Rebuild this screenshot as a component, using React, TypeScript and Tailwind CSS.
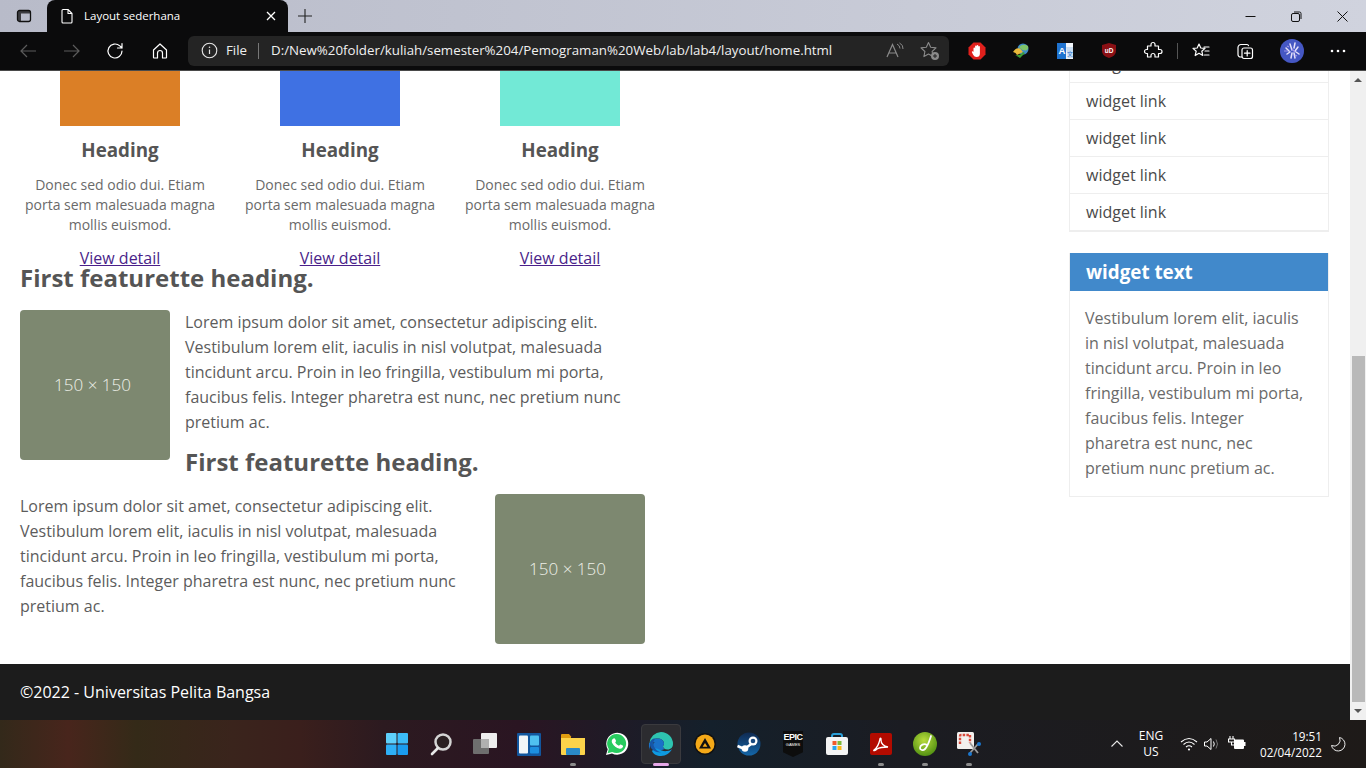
import React from "react";

const S = ({ w = 20, h = 20, vb = "0 0 20 20", children, className = "" }: any) => (
  <svg width={w} height={h} viewBox={vb} fill="none" className={className}>{children}</svg>
);
const st = { stroke: "currentColor", strokeWidth: 1.2, strokeLinecap: "round", strokeLinejoin: "round" } as const;

function TabBar() {
  return (
    <div className="flex h-[32px] bg-gradient-to-r from-[#b8bbc9] to-[#d0d3de] text-[#111]">
      <div className="w-[47px] flex items-center justify-center">
        <S w={16} h={16} vb="0 0 16 16"><rect x="1.500" y="2.500" width="13" height="11" rx="2" stroke="#111" strokeWidth="1.300" /><path d="M2 3h12v2.500H5V13H2z" fill="#111" opacity=".75" /></S>
      </div>
      <div className="w-[241px] h-[32px] bg-[#0b0b0c] rounded-t-lg flex items-center pl-[13px] pr-[12px] text-white">
        <S w={14} h={16} vb="0 0 14 16"><path d="M2 2.500a1 1 0 0 1 1-1h5l4 4v8.500a1 1 0 0 1-1 1H3a1 1 0 0 1-1-1zM8 1.500v4h4" stroke="#fff" strokeWidth="1.100" strokeLinejoin="round" /></S>
        <span className="ml-[10px] text-[11.500px] flex-1">Layout sederhana</span>
        <S w={10} h={10} vb="0 0 10 10"><path d="M1 1l8 8M9 1L1 9" stroke="#fff" strokeWidth="1.300" /></S>
      </div>
      <div className="w-[34px] flex items-center justify-center">
        <S w={16} h={16} vb="0 0 16 16"><path d="M8 1v14M1 8h14" stroke="#222" strokeWidth="1.100" /></S>
      </div>
      <div className="flex-1" />
      <div className="flex items-center pr-[18px] gap-[35px]">
        <S w={11} h={11} vb="0 0 11 11"><path d="M0.500 5.500h10" stroke="#111" /></S>
        <S w={11} h={11} vb="0 0 11 11"><rect x="0.500" y="2.500" width="8" height="8" rx="1.500" stroke="#111" /><path d="M3 1h5.500A1.500 1.500 0 0 1 10 2.500V8" stroke="#111" /></S>
        <S w={11} h={11} vb="0 0 11 11"><path d="M.5.500l10 10M10.500.500l-10 10" stroke="#111" /></S>
      </div>
    </div>
  );
}

function ToolBtn({ w, children, className = "" }: any) {
  return <div className={`flex items-center justify-center shrink-0 ${className}`} style={{ width: w }}>{children}</div>;
}

function ToolBar() {
  return (
    <div className="flex h-[39px] bg-[#0b0b0c] border-b border-[#4a4a4a] items-center text-white pb-[1px]">
      <div className="w-[6px]" />
      <ToolBtn w={44}><S><path d="M18 10H3M9 4l-6 6 6 6" stroke="#5c5c5c" strokeWidth="1.200" /></S></ToolBtn>
      <ToolBtn w={44}><S><path d="M2 10h15M11 4l6 6-6 6" stroke="#5c5c5c" strokeWidth="1.200" /></S></ToolBtn>
      <ToolBtn w={44}><S><path d="M16 10a7 7 0 1 1-2.200-5.100L16 7M16 2.500V7h-4.500" {...st} stroke="#fff" /></S></ToolBtn>
      <ToolBtn w={44}><S><path d="M3.500 9L10 3l6.500 6v7.500a.5.5 0 0 1-.5.500h-3.500v-5a2.500 2.500 0 0 0-5 0v5H4a.5.5 0 0 1-.5-.5z" {...st} stroke="#fff" /></S></ToolBtn>
      <div className="w-[761px] h-[30px] ml-[6px] rounded-md bg-[#242424] flex items-center shrink-0">
        <div className="w-[13px]" />
        <S w={17} h={17} vb="0 0 17 17"><circle cx="8.500" cy="8.500" r="7.300" stroke="#e6e6e6" strokeWidth="1.100" /><path d="M8.500 7.500v4.500" stroke="#e6e6e6" strokeWidth="1.200" /><circle cx="8.500" cy="5.200" r=".8" fill="#e6e6e6" /></S>
        <span className="ml-[8px] text-[13.300px] text-[#eee]">File</span>
        <div className="w-px h-[16px] bg-[#777] ml-[11px] mr-[12px]" />
        <span className="text-[13.300px] text-[#f0f0f0] flex-1 whitespace-nowrap">D:/New%20folder/kuliah/semester%204/Pemograman%20Web/lab/lab4/layout/home.html</span>
        <S w={20} h={20} className="mr-[14px]"><path d="M2 16L7.500 3.500 13 16M4 12h7" stroke="#8a8a8a" strokeWidth="1.200" /><path d="M12 3q3 1.500 3 4.500M14.500 2q4 2 3.500 6" stroke="#8a8a8a" strokeWidth="1" /></S>
        <S w={22} h={22} vb="0 0 22 22" className="mr-[8px]"><path d="M9.500 2.500l2.200 4.800 5.300.6-3.900 3.600 1 5.100-4.600-2.600-4.600 2.600 1-5.100L2 7.900l5.300-.6z" stroke="#8a8a8a" strokeWidth="1.100" strokeLinejoin="round" /><circle cx="16" cy="16" r="4" fill="#8a8a8a" /><path d="M14 16h4M16 14v4" stroke="#222" strokeWidth="1" /></S>
      </div>
      <div className="w-[6px]" />
      <ToolBtn w={44}><S w={18} h={18} vb="0 0 18 18"><path d="M5.500 .5h7L17.500 5.500v7L12.500 17.500h-7L.5 12.500v-7z" fill="#e0201c" /><path d="M5.500 10V6.500q0-.9.8-.9t.8.9V9 4.500q0-.9.8-.9t.8.9V8.500 3.800q0-.9.800-.9t.8.9V8.500 5q0-.9.800-.9t.8.900v6.500q0 3.500-3.400 3.500-2.200 0-3.200-2L4 10.500q-.5-.9.3-1.300.6-.2 1.200.8z" fill="#fff" /></S></ToolBtn>
      <ToolBtn w={44}><S w={18} h={16} vb="0 0 18 16"><circle cx="11" cy="6" r="5.500" fill="#3f8ac8" /><path d="M7 4q4-4 9-1 1 3-2 4.500-4 .5-7-3.500z" fill="#7fc46a" /><path d="M1 9q3-5 7-3.500l3 3.500-6 3q-1-2.500-4-3z" fill="#e9b93a" /><path d="M3 12q5 1 8-3l2 1-5 5z" fill="#3d9e35" /></S></ToolBtn>
      <ToolBtn w={44}><S w={16} h={16} vb="0 0 16 16"><rect width="16" height="16" fill="#f2f6fb" /><path d="M0 0h9v16H0z" fill="#1f73d0" /><path d="M9 4h7v11H11z" fill="#c8dcf0" /><text x="1.500" y="10.500" fontSize="9.500" fontWeight="700" fill="#fff" fontFamily="Liberation Sans">A</text><text x="10" y="13" fontSize="6" fill="#1f73d0" fontFamily="Noto Sans CJK SC">文</text></S></ToolBtn>
      <ToolBtn w={44}><S w={16} h={17} vb="0 0 16 17"><path d="M8 1l7 2v6q0 5-7 7-7-2-7-7V3z" fill="#8a1015" /><text x="8" y="10.500" textAnchor="middle" fontSize="6.500" fontWeight="700" fill="#fff" fontFamily="Liberation Sans">uD</text></S></ToolBtn>
      <ToolBtn w={44}><S><path d="M8 3.500a2 2 0 0 1 4 0V5h3.500v3.500H17a2 2 0 0 1 0 4h-1.500V16H12v-1.500a2 2 0 0 0-4 0V16H4.500v-3.500H3.500a2 2 0 0 1 0-4H4.500V5H8z" {...st} stroke="#fff" /></S></ToolBtn>
      <div className="w-px h-[16px] bg-[#555] ml-[2px]" />
      <ToolBtn w={44} className="ml-[1px]"><S><path d="M8 3l1.800 4 4.200.4-3.200 2.800 1 4.300L8 12.300l-3.800 2.200 1-4.300L2 7.400 6.200 7zM13 6h5M14 10h4M13.500 14H18" {...st} stroke="#fff" /></S></ToolBtn>
      <ToolBtn w={44}><S><path d="M7 16H5.500A2.500 2.500 0 0 1 3 13.500V6.500a3 3 0 0 1 3-3h6a1.500 1.500 0 0 1 1.500 1.200" {...st} stroke="#fff" /><rect x="7" y="7" width="10.500" height="10.500" rx="2" {...st} stroke="#fff" /><path d="M12.200 9.500v5.500M9.500 12.200H15" {...st} stroke="#fff" /></S></ToolBtn>
      <ToolBtn w={44} className="ml-[3px]"><S w={24} h={24} vb="0 0 24 24"><circle cx="12" cy="12" r="12" fill="#3b46b8" /><circle cx="12" cy="12" r="12" fill="#5a78d8" opacity=".35" /><path d="M6 9l3 3M10 5l2 6M15 4l-1 5M18 8l-3 4M7 15l3-2M11 19l1-5M15 19l-1-5M19 15l-3-2" stroke="#e4e0fa" strokeWidth="1.500" strokeLinecap="round" /><path d="M4 12h4M12 10l3 3M9 8l-2-1M17 17l-2-1" stroke="#9d93ea" strokeWidth="1.200" /></S></ToolBtn>
      <ToolBtn w={48}><S w={16} h={4} vb="0 0 16 4"><circle cx="2" cy="2" r="1.300" fill="#fff" /><circle cx="8" cy="2" r="1.300" fill="#fff" /><circle cx="14" cy="2" r="1.300" fill="#fff" /></S></ToolBtn>
    </div>
  );
}

function Card({ color }: { color: string }) {
  return (
    <div className="w-[220px] px-[10px] text-center">
      <div className="w-[120px] h-[55px] mx-auto" style={{ background: color }} />
      <h3 className="text-[18.800px] leading-[24px] font-bold mt-[12px] text-[#555]">Heading</h3>
      <p className="text-[14px] leading-[20px] mt-[13px] text-[#6a6a6a]">Donec sed odio dui. Etiam porta sem malesuada magna mollis euismod.</p>
      <a className="block text-[16px] leading-[22px] mt-[12px] underline text-[#4a1f8a]">View detail</a>
    </div>
  );
}

const Ph = () => (
  <div className="w-[150px] h-[150px] shrink-0 rounded-[4px] bg-[#7d8870] flex items-center justify-center text-[#eef0e8] text-[17px] font-light pr-[5px]">150 × 150</div>
);

const LOREM = "Lorem ipsum dolor sit amet, consectetur adipiscing elit. Vestibulum lorem elit, iaculis in nisl volutpat, malesuada tincidunt arcu. Proin in leo fringilla, vestibulum mi porta, faucibus felis. Integer pharetra est nunc, nec pretium nunc pretium ac.";

function Left() {
  return (
    <div className="w-[670px] shrink-0">
      <div className="flex pl-[10px]">
        <Card color="#db7f26" />
        <Card color="#3f71e3" />
        <Card color="#72e9d6" />
      </div>
      <h2 className="pl-[20px] text-[24px] leading-[30px] font-bold text-[#555] mt-[-6px] relative">First featurette heading.</h2>
      <div className="flex pl-[20px] mt-[17px]">
        <Ph />
        <div className="ml-[15px] w-[440px]">
          <p className="text-[16px] leading-[25px] text-[#5c5c5c]">{LOREM}</p>
          <h2 className="text-[24px] leading-[30px] font-bold text-[#555] mt-[12px]">First featurette heading.</h2>
        </div>
      </div>
      <div className="flex pl-[20px] pr-[25px] mt-[17px] items-start justify-between">
        <p className="text-[16px] leading-[25px] text-[#5c5c5c] w-[440px]">{LOREM}</p>
        <Ph />
      </div>
    </div>
  );
}

function Side() {
  return (
    <div className="w-[260px] ml-[399px] shrink-0">
      <div className="border-x border-b-2 border-[#eee] h-[161px] overflow-hidden">
        <div className="mt-[-25px]">
          {[0, 1, 2, 3, 4].map((i) => (
            <div key={i} className="h-[37px] last:h-[36px] px-[16px] flex items-center text-[16px] text-[#4a4a4a] border-b border-[#eee] last:border-b-0">widget link</div>
          ))}
        </div>
      </div>
      <div className="mt-[21px] border-x border-b border-[#eee]">
        <div className="h-[38px] bg-[#4189cb] px-[16px] flex items-center text-white text-[18.800px] font-bold">widget text</div>
        <p className="px-[15px] pt-[15px] pb-[15px] text-[16px] leading-[25px] text-[#6a6a6a]">{LOREM.slice(57)}</p>
      </div>
    </div>
  );
}

function Scroll() {
  return (
    <div className="w-[16px] shrink-0 bg-[#f0f0f0] flex flex-col items-center">
      <div className="h-[18px] flex items-center justify-center"><div className="w-0 h-0 border-x-[4px] border-x-transparent border-b-[4px] border-b-[#555]" /></div>
      <div className="w-[13px] h-[346px] mt-[267px] bg-[#b9b9b9]" />
      <div className="flex-1" />
      <div className="h-[18px] flex items-center justify-center"><div className="w-0 h-0 border-x-[4px] border-x-transparent border-t-[4px] border-t-[#555]" /></div>
    </div>
  );
}

function Dot({ show, color = "#8c8c8c", w = 6 }: any) {
  return show ? <div className="absolute bottom-[2px] left-1/2 -translate-x-1/2 h-[3px] rounded-full" style={{ width: w, background: color }} /> : null;
}

function TaskIcon({ children, dot, active }: any) {
  return (
    <div className="relative w-[44px] h-[48px] flex items-center justify-center">
      {active && <div className="absolute left-[2px] right-[2px] top-[4px] bottom-[4px] rounded-[4px] bg-[#2c2c30] border border-[#3a3a3e]" />}
      <div className="relative">{children}</div>
      <Dot show={dot || active} color={active ? "#e6a8e8" : "#8c8c8c"} w={active ? 16 : 6} />
    </div>
  );
}

function TaskBar() {
  return (
    <div className="h-[48px] flex items-center bg-[linear-gradient(90deg,#33291a_0%,#48251c_5%,#342a18_10%,#3a241c_17%,#3a1f1c_22%,#2c1a20_28%,#2a1522_38%,#14202b_52%,#1b1c22_66%,#1e1a18_100%)] text-white">
      <div className="w-[375px] shrink-0" />
      <div className="flex w-[616px] shrink-0">
        <TaskIcon><S w={24} h={24} vb="0 0 24 24"><rect x="1" y="1" width="10.500" height="10.500" rx="1" fill="#5ed0fb" /><rect x="12.500" y="1" width="10.500" height="10.500" rx="1" fill="#3cbcf8" /><rect x="1" y="12.500" width="10.500" height="10.500" rx="1" fill="#2eb0f7" /><rect x="12.500" y="12.500" width="10.500" height="10.500" rx="1" fill="#1a9cf0" /></S></TaskIcon>
        <TaskIcon><S w={24} h={24} vb="0 0 24 24"><circle cx="14" cy="10" r="7.500" stroke="#d4d4d4" strokeWidth="2.500" fill="#2a2022" /><path d="M9 16l-6 6" stroke="#e8e8e8" strokeWidth="2.600" strokeLinecap="round" /></S></TaskIcon>
        <TaskIcon><S w={24} h={24} vb="0 0 24 24"><rect x="8" y="1" width="16" height="15" rx="1" fill="#eee" /><rect x="0" y="7" width="16" height="15" rx="1" fill="#6e6e6e" /><rect x="8" y="7" width="8" height="9" fill="#b0b0b0" /></S></TaskIcon>
        <TaskIcon><S w={24} h={24} vb="0 0 24 24"><rect x="0" y="1" width="24" height="23" rx="1" fill="#12569e" /><rect x="2" y="3.500" width="9" height="18" rx="1" fill="#f2f5f8" /><rect x="13" y="3.500" width="9" height="10" rx="1" fill="#4fc0f0" /><rect x="13" y="15" width="9" height="6.500" rx="1" fill="#1d8fe0" /></S></TaskIcon>
        <TaskIcon dot><S w={24} h={24} vb="0 0 24 24"><path d="M0 3a1 1 0 0 1 1-1h7l2.500 3H10v3H0z" fill="#e09c10" /><path d="M0 6h24v16a1 1 0 0 1-1 1H1a1 1 0 0 1-1-1z" fill="#fcd34a" /><rect x="5" y="16" width="14" height="7" rx="1" fill="#2a8ac8" /></S></TaskIcon>
        <TaskIcon><S w={24} h={24} vb="0 0 24 24"><path d="M1 23l1.700-5.800A11 11 0 1 1 7 21.400z" fill="#fff" /><path d="M2.600 21.300l1.200-4.300A9.500 9.500 0 1 1 7.200 20z" fill="#27cb5f" /><path d="M8.500 6.500q1-.6 1.500.2l1 2q.2.600-.5 1.300-.5.500 0 1.100 1.200 1.700 3 2.500.6.200 1-.3.700-.9 1.200-.7l2 1q.7.400.2 1.500-1 2-3.200 1.700-5-1-7.700-6-1-3 1.500-4.300z" fill="#fff" /></S></TaskIcon>
        <TaskIcon active><S w={26} h={26} vb="0 0 26 26"><path d="M13 1a12 12 0 0 1 12 12c0 3-2 5.500-5.500 5.500-3 0-4.500-1.500-4.500-3 0-1 1-1.500 1-3 0-3-3-5-6.500-5S3 10 1.500 12A12 12 0 0 1 13 1z" fill="#2ec4b0" /><path d="M1.500 12C3 9 6 7.500 9.500 7.500c3.500 0 6.500 2 6.500 5 0 1.500-1 2-1 3 0 1 .5 2 2 2.500-2 1-8 2-11-1-2-2-1-5 1-6-3 0-6 3-5 8a12 12 0 0 1-1-7z" fill="#1a72c8" /><path d="M4 20c1 3 5 5 9 5 5 0 9-3 11-7-1 1-3 2-5 2-3 .5-6-.5-8-1.500-2-1-4-2-7 1.500z" fill="#0e9ae0" /><path d="M2 13c0-4 3-6 6-5.500-3 1.500-3 5-2 8 1 3 4 5 7 6-6 0-11-3-11-8.500z" fill="#1557a8" /></S></TaskIcon>
        <TaskIcon><S w={24} h={24} vb="0 0 24 24"><circle cx="12" cy="12" r="11" fill="#111" /><circle cx="12" cy="12" r="9.500" fill="#f4a918" /><path d="M12 6l6 10.500H6z" fill="#111" /><path d="M12 11l2.400 3.800H9.600z" fill="#f4a918" /></S></TaskIcon>
        <TaskIcon><S w={24} h={24} vb="0 0 24 24"><defs><linearGradient id="stm" x1="0" y1="0" x2="0" y2="1"><stop offset="0" stopColor="#0f2a52" /><stop offset="1" stopColor="#1466a8" /></linearGradient></defs><circle cx="12" cy="12" r="11.500" fill="url(#stm)" /><path d="M0.500 14l7 3 8-6" stroke="#fff" strokeWidth="2.500" /><circle cx="16" cy="9" r="4.500" fill="#fff" /><circle cx="16" cy="9" r="2.300" fill="#1a4a80" /><circle cx="8" cy="16.500" r="3.300" fill="#fff" /></S></TaskIcon>
        <TaskIcon><div className="w-[20px] h-[26px] bg-[#0d0d0d] [clip-path:polygon(0_0,100%_0,100%_82%,50%_100%,0_82%)] flex flex-col items-center text-white font-['Liberation_Sans',sans-serif] leading-none pt-[2px]"><span className="text-[9px] font-bold tracking-[-0.5px]">EPIC</span><span className="text-[4px] mt-[1px]">GAMES</span></div></TaskIcon>
        <TaskIcon><S w={24} h={24} vb="0 0 24 24"><path d="M7 7V4a2 2 0 0 1 2-2h6a2 2 0 0 1 2 2v3" stroke="#2a9fd8" strokeWidth="2" /><rect x="1" y="5" width="22" height="18" rx="2" fill="#f4f4f4" /><rect x="7.500" y="9" width="4" height="4" fill="#f15a2c" /><rect x="12.500" y="9" width="4" height="4" fill="#7eba3a" /><rect x="7.500" y="14" width="4" height="4" fill="#2aa4ee" /><rect x="12.500" y="14" width="4" height="4" fill="#fcb818" /></S></TaskIcon>
        <TaskIcon dot><S w={22} h={22} vb="0 0 22 22"><rect width="22" height="22" rx="2" fill="#b30b00" /><path d="M4 17c3-2 5-6 6-11 .2-1.500 1.500-1 1 1 0 3 2 6 7 7-3 0-8 0-11 2-2 2-4 2-3 1z" stroke="#fff" strokeWidth="1.300" fill="none" /></S></TaskIcon>
        <TaskIcon dot><S w={24} h={24} vb="0 0 24 24"><defs><radialGradient id="gr" cx=".45" cy=".35" r=".7"><stop offset="0" stopColor="#b8dc3c" /><stop offset="1" stopColor="#4c8c10" /></radialGradient></defs><circle cx="12" cy="12" r="12" fill="url(#gr)" /><path d="M18 4c-2 6-3 10-6 13-2 2-5 1-5-1 0-3 4-5 7-3" stroke="#fff" strokeWidth="1.800" fill="none" strokeLinecap="round" /></S></TaskIcon>
        <TaskIcon dot><S w={26} h={26} vb="0 0 26 26"><rect x="1" y="1" width="17" height="17" rx="1.500" fill="#f2f0ee" /><path d="M4 13V5a1 1 0 0 1 1-1h9v8" stroke="#d8483a" strokeWidth="2.400" strokeDasharray="2.500 1.200" /><path d="M14 12l8 10M14 22l8-9" stroke="#9a9a9a" strokeWidth="1.800" /><circle cx="14" cy="23" r="2" fill="#1a78d0" /><circle cx="23" cy="13" r="2" fill="#1a78d0" /></S></TaskIcon>
      </div>
      <div className="flex-1" />
      <div className="flex items-center shrink-0">
        <S w={14} h={14} vb="0 0 14 14" className="mr-[5px]"><path d="M1.500 9.500L7 4l5.500 5.500" stroke="#e8e8e8" strokeWidth="1.100" /></S>
        <div className="w-[44px] text-center text-[12px] leading-[16px] mr-[7px]"><div>ENG</div><div>US</div></div>
        <S w={18} h={14} vb="0 0 18 14" className="mr-[5px]"><path d="M1 5q8-7 16 0M3.500 7.500q5.500-5 11 0M6 10q3-2.500 6 0" stroke="#fff" strokeWidth="1.100" /><circle cx="9" cy="12.500" r="1.100" fill="#fff" /></S>
        <S w={18} h={16} vb="0 0 18 16" className="mr-[7px]"><path d="M1.500 6v4h2.500l4 3.500v-11L4 6z" stroke="#fff" strokeWidth="1" strokeLinejoin="round" /><path d="M10.500 5.500q1.500 2.500 0 5" stroke="#fff" /><path d="M13 3.500q3 4.500 0 9" stroke="#777" /></S>
        <S w={18} h={16} vb="0 0 18 16"><path d="M2 0v3M5 0v3M.5 3h6v3H.5zM3.500 6v3H6" stroke="#fff" strokeWidth="1.100" /><path d="M6 3.500h9a1 1 0 0 1 1 1V6h1.500v4H16v2a1 1 0 0 1-1 1H7a1 1 0 0 1-1-1z" fill="#fff" /></S>
        <div className="w-[76px] text-right text-[11.700px] leading-[16px]"><div>19:51</div><div className="whitespace-nowrap">02/04/2022</div></div>
        <S w={16} h={16} vb="0 0 16 16" className="ml-[8px] mr-[20px]"><path d="M9.500 1.500A6.800 6.800 0 1 1 1.500 9.500 6 6 0 0 0 9.500 1.500z" stroke="#ececec" strokeWidth="1" strokeLinejoin="round" /></S>
      </div>
    </div>
  );
}

export default function App() {
  return (
    <div className="w-[1366px] h-[768px] flex flex-col overflow-hidden bg-white font-['Open_Sans',sans-serif]">
      <TabBar />
      <ToolBar />
      <div className="h-[649px] flex">
        <div className="w-[1350px] shrink-0 flex flex-col">
          <div className="flex h-[593px] overflow-hidden">
            <Left />
            <Side />
          </div>
          <div className="h-[56px] bg-[#1c1c1c] flex items-center pl-[20px] text-white text-[16px]">©2022 - Universitas Pelita Bangsa</div>
        </div>
        <Scroll />
      </div>
      <TaskBar />
    </div>
  );
}
